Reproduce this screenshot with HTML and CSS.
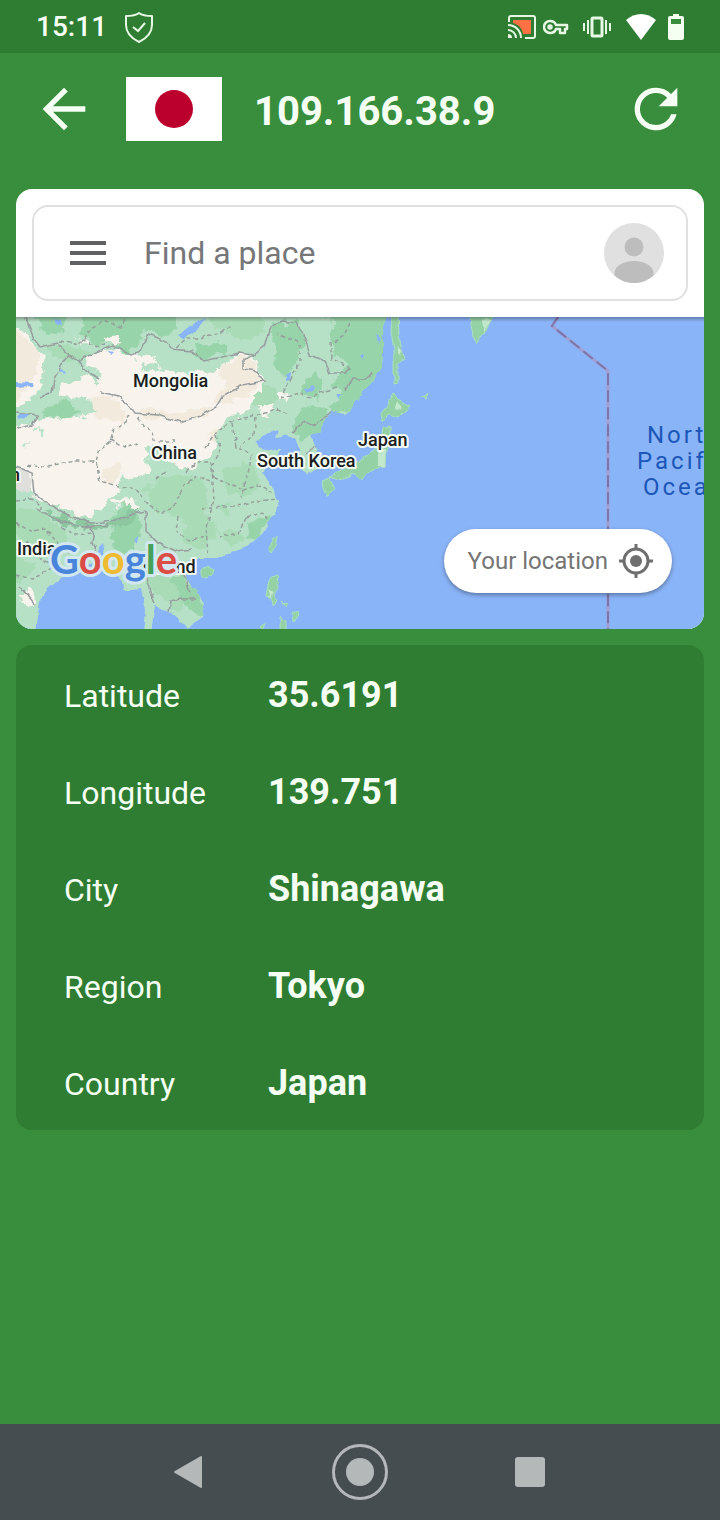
FILE: index.html
```
<!DOCTYPE html>
<html lang="en">
<head>
    <meta charset="UTF-8">
    <meta name="viewport" content="width=device-width, initial-scale=1.0">
    <title>109.166.38.9</title>
    <link rel="stylesheet" href="styles.css">
</head>
<body>
    <div class="statusbar">
        <span class="clock">15:11</span>
        <svg class="shield" width="30" height="32" viewBox="0 0 30 32" fill="none" stroke="#e6f7e3" stroke-width="2">
            <path d="M15 2C11 5 7 5 2 5v9c0 8 5 13 13 17 8-4 13-9 13-17V5c-5 0-9 0-13-3z" stroke-linejoin="round"/>
            <path d="M9 16l5 4 7-8"/>
        </svg>
        <div class="status-icons">
            <!-- cast -->
            <svg width="28" height="24" viewBox="0 0 28 24" fill="none" stroke="#e6f7e3" stroke-width="2">
                <path d="M5 5h18v14h-8C14 13 11 10 5 8z" fill="#ff7043" stroke="none"/>
                <path d="M1 7V3q0-2 2-2h22q2 0 2 2v18q0 2-2 2h-8"/>
                <path d="M0 10a13 13 0 0 1 13 13M0 15a8 8 0 0 1 8 8"/>
                <path d="M0 19a4 4 0 0 1 4 4H0z" fill="#e6f7e3" stroke="none"/>
            </svg>
            <!-- vpn key -->
            <svg class="key" width="26" height="16" viewBox="0 0 26 16" fill="none" stroke="#e6f7e3" stroke-width="2.500">
                <path d="M13 6h11v4h-2v4h-5v-4h-4c-1 3-3 4-6 4A6 6 0 0 1 7 2c3 0 5 1 6 4z" stroke-linejoin="round"/>
                <circle cx="7" cy="8" r="1.500"/>
            </svg>
            <!-- vibrate -->
            <svg class="vibrate" width="28" height="22" viewBox="0 0 28 22" fill="none" stroke="#e6f7e3" stroke-width="2">
                <path d="M1 7v8M5 4v14M23 4v14M27 7v8"/>
                <rect x="9" y="2" width="10" height="18" rx="1" stroke-width="3"/>
            </svg>
            <!-- wifi -->
            <svg class="wifi" width="30" height="26" viewBox="0 0 30 26" fill="#fff">
                <path d="M15 26L0 6C9-2 21-2 30 6z"/>
            </svg>
            <!-- battery -->
            <svg class="battery" width="16" height="26" viewBox="0 0 16 26">
                <path d="M5 0h6v2h3q2 0 2 2v20q0 2-2 2H2q-2 0-2-2V4q0-2 2-2h3z" fill="#f4fff2"/>
                <path d="M3 5h10v5H3z" fill="#388e3c"/>
            </svg>
        </div>
    </div>

    <header class="appbar">
        <button class="icon-btn" aria-label="Back">
            <svg width="64" height="64" viewBox="0 0 24 24" fill="#f6fff4"><path d="M20 11H7.83l5.59-5.59L12 4l-8 8 8 8 1.41-1.41L7.83 13H20v-2z"/></svg>
        </button>
        <svg class="flag" width="96" height="64" viewBox="0 0 96 64">
            <rect width="96" height="64" fill="#fff"/>
            <circle cx="48" cy="32" r="19" fill="#bc002d"/>
        </svg>
        <h1 class="ip">109.166.38.9</h1>
        <button class="icon-btn refresh" aria-label="Refresh">
            <svg width="64" height="64" viewBox="0 0 24 24" fill="#f6fff4"><path d="M17.65 6.35A7.96 7.96 0 0 0 12 4a8 8 0 1 0 7.73 10h-2.08A6 6 0 1 1 12 6c1.66 0 3.14.69 4.22 1.78L13 11h7V4l-2.35 2.35z"/></svg>
        </button>
    </header>

    <main class="content">
        <section class="map-card">
            <div class="search">
                <div class="search-box">
                    <button class="icon-btn" aria-label="Menu">
                        <svg width="48" height="48" viewBox="0 0 24 24" fill="#5f6163"><path d="M3 18h18v-2H3v2zm0-5h18v-2H3v2zm0-7v2h18V6H3z"/></svg>
                    </button>
                    <input class="search-input" type="text" placeholder="Find a place" aria-label="Find a place">
                    <button class="icon-btn" aria-label="Account">
                        <svg width="60" height="60" viewBox="0 0 60 60">
                            <circle cx="30" cy="30" r="30" fill="#e0e0e0"/>
                            <g fill="#bdbdbd">
                                <circle cx="30" cy="24" r="9.5"/>
                                <path d="M10.500 52.500V49C12 42 20 38 30 38s18 4 19.500 11v3.500C44 57.500 37 60 30 60s-14-2.500-19.500-7.500z"/>
                            </g>
                        </svg>
                    </button>
                </div>
            </div>

            <div class="map">
                <svg class="map-canvas" viewBox="0 0 688 312" preserveAspectRatio="xMidYMid slice">
                    <defs>
                        <clipPath id="land">
                            <path d="M-6 -6H371L367 16V36L366 49L357 64L347 74L337 89Q332 97 327 97L316 94L309 102L304 114L294 120L301 132L303 144L300 152L291 157L284 153L282 140L284 132L279 122L272 118L266 120L259 121L262 112L252 116L239 125L246 132L254 134L266 131L262 138L251 146L247 156L256 170L263 185L259 196L252 206L247 216L231 230L214 236L200 241L184 241L172 245L168 252L170 263L180 273L188 286L187 300L172 311L163 304L157 296L143 290L138 288L137 300L135 318H128L130 293L125 272L117 273L107 273L106 264L97 250L83 240L70 250L57 253L43 263L33 271L25 280L22 296L20 318H-6Z"/>
                        </clipPath>
                        <!-- roughens the hand-plotted edges -->
                        <filter id="rough" x="-5%" y="-5%" width="110%" height="110%" color-interpolation-filters="sRGB">
                            <feTurbulence type="fractalNoise" baseFrequency="0.09" numOctaves="3" seed="4"/>
                            <feDisplacementMap in="SourceGraphic" scale="14" xChannelSelector="R" yChannelSelector="G"/>
                            <feGaussianBlur stdDeviation="0.7"/>
                        </filter>
                        <filter id="coast" x="-5%" y="-5%" width="110%" height="110%" color-interpolation-filters="sRGB">
                            <feTurbulence type="fractalNoise" baseFrequency="0.12" numOctaves="2" seed="7"/>
                            <feDisplacementMap in="SourceGraphic" scale="5" xChannelSelector="R" yChannelSelector="G"/>
                            <feGaussianBlur stdDeviation="0.5"/>
                        </filter>
                        <linearGradient id="edge" x1="0" y1="0" x2="0" y2="1">
                            <stop offset="0" stop-color="#000" stop-opacity=".3"/>
                            <stop offset="1" stop-color="#000" stop-opacity="0"/>
                        </linearGradient>
                    </defs>

                    <rect width="688" height="312" fill="#8ab4f8"/>

                    <g filter="url(#coast)">
                        <g clip-path="url(#land)">
                            <rect x="-6" y="-6" width="406" height="324" fill="#b6e1c6"/>

                            <!-- forest -->
                            <g fill="#98d4a9" filter="url(#rough)">
                                <path d="M15 -6H52L45 16L28 20zM68 -6H150L162 8L150 18L130 14L122 30L110 36L96 24L80 30L66 14z"/>
                                <path d="M180 26L206 24L212 34L190 42L178 38z"/>
                                <path d="M252 8L280 4L290 22L282 44L270 58L258 54L262 36zM306 -6H378V50L356 78L334 100L312 92L326 74L316 70L330 46L312 30L318 12z"/>
                                <path d="M288 62L300 54L308 66L300 82L288 76zM276 108L290 88L312 94L302 118L284 124z"/>
                                <path d="M124 44L138 46L142 54L130 58z"/>
                                <path d="M96 192L112 186L126 204L118 232L104 238L92 222L100 208z"/>
                                <path d="M232 208L248 198L256 200L240 222L228 220z"/>
                                <path d="M166 256L184 278L190 296L180 298L164 280L150 262z"/>
                                <path d="M32 90L44 84L60 90L68 96L46 102L28 98z"/>
                            </g>
                            <g fill="#a8dbb6" filter="url(#rough)">
                                <path d="M190 -6H240L250 14L230 24L200 12zM228 80L250 66L262 80L248 96L240 88z"/>
                                <path d="M128 168L160 158L188 166L196 190L170 202L140 196zM205 150L235 146L244 170L232 180L208 172z"/>
                                <path d="M-6 190L26 196L50 214L48 230L20 230L-6 214zM204 218L216 210L226 222L214 232z"/>
                                <path d="M30 28L62 30L78 40L60 46L36 40zM200 188L214 186L210 200zM166 200L190 194L204 216L190 232L168 224z"/>
                                <path d="M130 250L150 256L168 286L164 296L146 284L132 268zM-6 240L22 248L14 264L-6 262z"/>
                            </g>
                            <path d="M28 192L50 200L74 206L100 204L112 192L122 192L116 206L96 210L70 212L44 206z" fill="#8cc7a0" filter="url(#rough)"/>

                            <!-- steppe and desert -->
                            <g fill="#f8f3ed" filter="url(#rough)">
                                <path d="M-6 8L14 20L24 38L30 46L26 64L14 82L-6 98z"/>
                                <path d="M70 42L93 31L120 37L140 40L142 52L180 56L200 54L221 38L240 40L239 54L250 64L240 79L234 94L214 108L200 114L198 136L173 154L150 144L138 128L130 134L134 156L108 160L105 173L93 186L73 201L44 192L20 181L14 163L-6 150V110L24 102L63 101L84 92L78 84L40 80L46 68L66 60L84 66z"/>
                                <path d="M242 88L256 84L258 96L246 100zM262 76L272 74L270 84L262 82z"/>
                                <path d="M98 184L112 180L124 192L116 192L108 186L98 188zM4 276L14 270L20 284L8 290z"/>
                                <path d="M62 20L72 24L66 32zM88 20L104 18L106 24L92 26z"/>
                            </g>
                            <g fill="#f2eadc" filter="url(#rough)">
                                <path d="M-6 10L16 26L24 40L20 62L-6 88z"/>
                                <path d="M202 52L224 40L238 44L236 56L246 64L232 78L208 86L196 84L210 70z"/>
                                <path d="M76 82L96 80L112 96L106 110L92 104L78 98z"/>
                                <path d="M120 90L160 94L200 90L190 100L160 106L126 100zM84 150L106 148L104 164L84 164zM190 116L204 110L196 128z"/>
                            </g>
                            <g fill="#b6e1c6" filter="url(#rough)">
                                <path d="M70 46L84 58L78 62L64 52zM20 110L30 112L24 118zM8 128L12 122L10 132zM128 126L138 128L132 138z"/>
                                <path d="M204 116L212 100L230 98L224 112zM122 44L140 46L142 56L128 54z"/>
                            </g>
                            <path d="M-6 150L10 152L16 164L12 176L-6 170z" fill="#dfe0dc"/>

                            <!-- lakes -->
                            <g fill="#8ab4f8">
                                <path d="M0 65L17 66L16 69L0 70zM162 18L178 6L190 0L184 10L168 22zM4 96L12 97L8 102L2 100zM42 52L48 53L50 57L44 55zM92 33L98 34L95 37zM37 2L44 4L45 9L40 7z"/>
                                <path d="M270 58L275 55L274 63L270 64zM288 73L296 69L298 72L290 76zM344 40L348 36L347 43zM318 78L326 78L322 81zM82 230L86 226L88 240H84zM118 222L122 218L121 228zM360 16L365 22L362 28z"/>
                            </g>

                            <!-- country borders -->
                            <g fill="none" stroke="#979d9f" stroke-width="1.500">
                                <path d="M8 -4L18 22L24 30L42 26L52 38L62 44L78 36L96 29L116 37L124 34L132 17L152 26L156 32L176 34L188 44L206 40L222 36L238 38L248 30L254 10L266 4L280 6L290 24L294 38L308 44L314 56L330 56L334 50"/>
                                <path d="M52 38L40 58L38 62L36 76L24 80M62 44L70 54L84 62"/>
                                <path d="M84 76L102 80L112 88L118 96L142 98L164 106L182 100L200 90L206 80L226 68L248 64L240 54L228 52L228 42L240 38"/>
                                <path d="M330 74L336 62L350 62L356 56M276 116L288 104L300 108L316 94M302 128L290 136"/>
                                <path d="M0 95L22 98L16 108L0 112M0 150L16 156L18 176L34 188L56 200L76 206L100 204L120 196L130 194M20 192L44 204L66 210L92 208"/>
                                <path d="M70 206L78 214L76 226L82 238M130 194L130 214L142 226L160 234L176 232M144 240L160 246L170 262L174 276M152 294L154 284L166 282L180 282M126 244L132 268L138 286M4 270L20 288"/>
                            </g>

                            <!-- province borders -->
                            <g fill="none" stroke="#96a09c" stroke-width="1.500" stroke-dasharray="4 3">
                                <path d="M114 98L110 106L98 112L94 124L84 132L80 144L60 144L26 150L8 148M94 122L108 130L122 126M122 100L128 110L136 114L138 124L160 124M190 130L200 116L216 104L240 98L260 92L272 98"/>
                                <path d="M80 146L84 164L98 168L120 172L130 186L146 196L160 186L168 168L182 160L196 164M140 162L150 154M170 154L180 146L196 146L198 160L212 166L228 172"/>
                                <path d="M200 118L204 134L196 150L198 184L190 210L192 240M216 106L220 130L236 138L232 156L226 180M230 200L222 216L204 220M240 100L238 116L224 130"/>
                                <path d="M186 192L228 188L240 184L262 182M228 172L242 168L256 176M230 200L246 196L254 204M162 200L160 214L172 224L190 220"/>
                                <path d="M264 82L276 60L284 44L284 26L262 16M264 80L284 76L292 80L310 74L322 70M334 6L328 18L314 26L316 42L330 48L336 54"/>
                                <path d="M66 22L80 30L90 26M44 24L64 28L76 10L90 4L104 10L112 0M160 30L170 22L184 22L204 16L216 8"/>
                                <path d="M0 184L16 182L26 192M46 210L60 218L76 216M0 206L14 214L30 212L40 224L56 236M0 258L16 262L32 254L44 240M12 224L20 240L34 246"/>
                            </g>
                        </g>

                        <!-- islands and peninsulas -->
                        <g fill="#94d2a5" stroke="#a9dfbd" stroke-width="1">
                            <path d="M376 -6H382L383 19L388 41L382 46L382 66L378 67L378 32L375 16z"/>
                            <path d="M377 77L382 82L395 90L382 100L372 97L367 104L365 98L370 90z"/>
                            <path d="M367 110L374 109L374 124L370 134L369 150L358 153L350 157L344 162L338 157L322 163L314 160L331 150L344 144L354 136L364 128z"/>
                            <path d="M306 165L314 162L318 171L312 180L308 174z"/>
                            <path d="M257 220H261L259 230L255 236L252 232zM186 253L192 249L198 252L196 258L190 261L186 258z"/>
                            <path d="M254 260L263 259L262 270L258 278L262 284L256 290L255 280L250 278z"/>
                            <path d="M266 285L272 287L270 290zM277 296L281 294L282 302L278 304zM264 300L270 304V318H264zM244 310L250 305L246 312z"/>
                            <path d="M453 -6H479L469 16L461 26L457 20z"/>
                            <path d="M406 80L412 77L410 81z"/>
                        </g>
                        <g fill="#c2e8cc">
                            <path d="M362 134L369 132V150L362 150zM380 84L386 90L380 94zM380 28L386 34L384 40zM252 272L258 276L254 280zM466 4L476 2L468 14z"/>
                        </g>
                    </g>

                    <!-- maritime boundary -->
                    <g fill="none">
                        <path d="M542 0L536 9L592 54V312" stroke="#a09fd2" stroke-width="3"/>
                        <path d="M542 0L536 9L592 54V312" stroke="#7d76ad" stroke-width="2" stroke-dasharray="12 5"/>
                    </g>

                    <g class="ocean">
                        <text x="631" y="126">North</text>
                        <text x="621" y="152">Pacific</text>
                        <text x="627" y="178">Ocean</text>
                    </g>

                    <g class="place">
                        <text x="117" y="70">Mongolia</text>
                        <text x="135" y="142">China</text>
                        <text x="241" y="150">South Korea</text>
                        <text x="342" y="129">Japan</text>
                        <text x="1" y="238">India</text>
                        <text x="110" y="256">Thailand</text>
                        <text x="-6" y="164">n</text>
                    </g>

                    <text class="logo" x="34" y="257"><tspan class="blue">G</tspan><tspan class="red">o</tspan><tspan class="yellow">o</tspan><tspan class="blue">g</tspan><tspan class="green">l</tspan><tspan class="red">e</tspan></text>

                    <rect width="688" height="5" fill="url(#edge)"/>
                </svg>

                <button class="locate">
                    Your location
                    <svg width="36" height="36" viewBox="0 0 36 36" fill="none" stroke="#6f6f6f" stroke-width="3">
                        <circle cx="18" cy="18" r="12"/>
                        <circle cx="18" cy="18" r="6" fill="#6f6f6f" stroke="none"/>
                        <path d="M18 1v5M18 30v5M1 18h5M30 18h5"/>
                    </svg>
                </button>
            </div>
        </section>

        <table class="info">
            <tr><th scope="row">Latitude</th><td>35.6191</td></tr>
            <tr><th scope="row">Longitude</th><td>139.751</td></tr>
            <tr><th scope="row">City</th><td>Shinagawa</td></tr>
            <tr><th scope="row">Region</th><td>Tokyo</td></tr>
            <tr><th scope="row">Country</th><td>Japan</td></tr>
        </table>
    </main>

    <nav class="navbar">
        <button class="nav-btn" aria-label="Back">
            <svg width="56" height="56" viewBox="0 0 56 56" fill="#b4b8b9" stroke="#b4b8b9" stroke-width="2" stroke-linejoin="round"><path d="M13 28L39 13v30z"/></svg>
        </button>
        <button class="nav-btn" aria-label="Home">
            <svg width="56" height="56" viewBox="0 0 56 56">
                <circle cx="28" cy="28" r="26.500" fill="none" stroke="#b4b8b9" stroke-width="3"/>
                <circle cx="28" cy="28" r="14" fill="#b4b8b9"/>
            </svg>
        </button>
        <button class="nav-btn" aria-label="Recent apps">
            <svg width="56" height="56" viewBox="0 0 56 56"><rect x="13" y="13" width="30" height="30" rx="3" fill="#b4b8b9"/></svg>
        </button>
    </nav>
</body>
</html>
```

FILE: styles.css
```
* {
    box-sizing: border-box;
}

body {
    margin: 0;
    min-height: 100vh;
    display: flex;
    flex-direction: column;
    background-color: #388e3c;
    color: #f6fff4;
    font-family: Roboto, "Liberation Sans", sans-serif;
}

button {
    padding: 0;
    border: none;
    background: none;
    font-family: inherit;
    cursor: pointer;
}

svg {
    display: block;
}

/* status bar */
.statusbar {
    display: flex;
    align-items: center;
    height: 53px;
    padding: 0 36px;
    background-color: #2e7d32;
}

.clock {
    font-size: 28px;
    font-weight: 500;
}

.shield {
    margin-left: 17px;
}

.status-icons {
    display: flex;
    align-items: center;
    margin-left: auto;
}

.key {
    margin-left: 7px;
}

.vibrate {
    margin-left: 14px;
}

.wifi {
    margin-left: 15px;
}

.battery {
    margin-left: 12px;
}

/* app bar */
.appbar {
    display: flex;
    align-items: center;
    height: 112px;
    padding: 0 32px;
}

.flag {
    margin-left: 30px;
}

.ip {
    margin: 4px 0 0 32px;
    font-size: 40px;
    font-weight: 700;
}

.refresh {
    margin-left: auto;
}

.content {
    flex: 1;
    padding: 24px 16px 16px;
}

/* map */
.map-card {
    overflow: hidden;
    border-radius: 16px;
    background-color: #fff;
}

.search {
    padding: 16px;
}

.search-box {
    display: flex;
    align-items: center;
    height: 96px;
    padding: 0 22px 0 30px;
    border: 2px solid #e0e0e0;
    border-radius: 16px;
}

.search-input {
    flex: 1;
    min-width: 0;
    margin-left: 32px;
    padding: 0;
    border: none;
    outline: none;
    font-family: inherit;
    font-size: 32px;
    color: #202124;
}

.search-input::placeholder {
    color: #757779;
    opacity: 1;
}

.map {
    position: relative;
}

.map-canvas {
    width: 100%;
    height: 312px;
}

.place {
    font-size: 18px;
    font-weight: 500;
    fill: #1b1d20;
    stroke: #f4faf4;
    stroke-width: 4px;
    stroke-linejoin: round;
    paint-order: stroke;
}

.ocean {
    font-size: 24px;
    letter-spacing: 3px;
    fill: #1c57b8;
}

.logo {
    font-family: Lato, sans-serif;
    font-size: 40px;
    font-weight: 700;
    stroke: #d3e8ee;
    stroke-width: 6px;
    stroke-linejoin: round;
    paint-order: stroke;
}

.blue {
    fill: #4a85dc;
}

.red {
    fill: #db4c45;
}

.yellow {
    fill: #efbb30;
}

.green {
    fill: #43a15c;
}

.locate {
    position: absolute;
    right: 32px;
    bottom: 36px;
    display: flex;
    align-items: center;
    gap: 10px;
    height: 64px;
    padding: 0 18px 0 24px;
    border-radius: 32px;
    background-color: #fff;
    box-shadow: 0 2px 4px rgba(0, 0, 0, 0.35);
    color: #757575;
    font-size: 24px;
}

/* location details */
.info {
    width: 100%;
    margin-top: 16px;
    border-spacing: 0;
    border-radius: 16px;
    background-color: #2e7d32;
}

.info th,
.info td {
    height: 97px;
    padding: 26px 0 0 48px;
    line-height: 48px;
    text-align: left;
    vertical-align: baseline;
}

.info th {
    width: 252px;
    font-size: 32px;
    font-weight: 400;
}

.info td {
    padding-left: 0;
    font-size: 36px;
    font-weight: 700;
}

/* system navigation */
.navbar {
    display: flex;
    justify-content: center;
    align-items: center;
    gap: 114px;
    height: 96px;
    background-color: #454d51;
}
```
